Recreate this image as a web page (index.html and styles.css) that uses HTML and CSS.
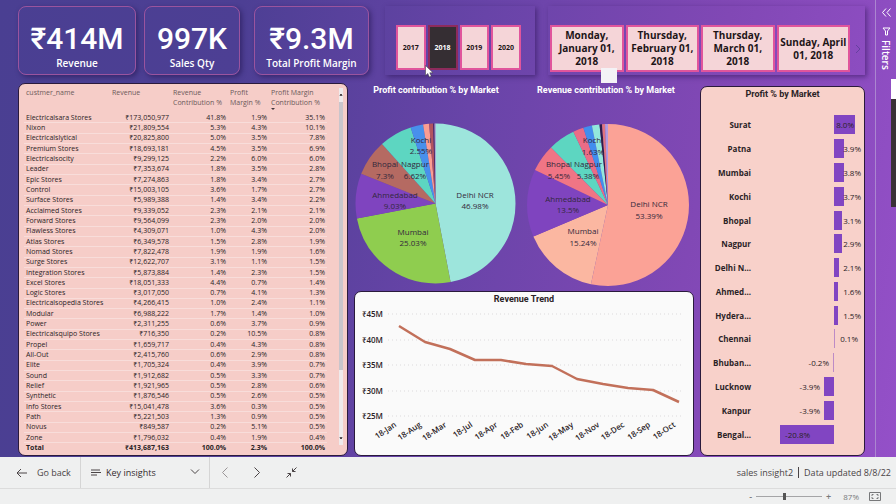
FILE: index.html
```html
<!DOCTYPE html>
<html lang="en">
<head>
<meta charset="utf-8">
<title>Sales insight</title>
<link rel="stylesheet" href="styles.css">
</head>
<body>
<main class="stage">
  <div class="report">
    <header class="top">
      <section class="kpi kpi-revenue"><strong>₹414M</strong><span>Revenue</span></section>
      <section class="kpi kpi-qty"><strong>997K</strong><span>Sales Qty</span></section>
      <section class="kpi kpi-margin"><strong>₹9.3M</strong><span>Total Profit Margin</span></section>
      <div class="slicer years">
        <button type="button">2017</button>
        <button type="button" class="selected">2018</button>
        <button type="button">2019</button>
        <button type="button">2020</button>
      </div>
      <div class="slicer dates">
        <button type="button">Monday, January 01, 2018</button>
        <button type="button">Thursday, February 01, 2018</button>
        <button type="button">Thursday, March 01, 2018</button>
        <button type="button">Sunday, April 01, 2018</button>
        <svg class="next" viewBox="0 0 6 10" aria-hidden="true"><path d="M1 1l4 4-4 4"/></svg>
      </div>
    </header>
    <div class="panels">
      <section class="panel customers">
        <table>
          <thead>
            <tr><th>custmer_name</th><th>Revenue</th><th>Revenue<br>Contribution %</th><th>Profit<br>Margin %</th><th class="sorted">Profit Margin<br>Contribution %</th></tr>
          </thead>
          <tbody>
            <tr><td>Electricalsara Stores</td><td>₹173,050,977</td><td>41.8%</td><td>1.9%</td><td>35.1%</td></tr>
            <tr><td>Nixon</td><td>₹21,809,554</td><td>5.3%</td><td>4.3%</td><td>10.1%</td></tr>
            <tr><td>Electricalslytical</td><td>₹20,825,800</td><td>5.0%</td><td>3.5%</td><td>7.8%</td></tr>
            <tr><td>Premium Stores</td><td>₹18,693,181</td><td>4.5%</td><td>3.5%</td><td>6.9%</td></tr>
            <tr><td>Electricalsocity</td><td>₹9,299,125</td><td>2.2%</td><td>6.0%</td><td>6.0%</td></tr>
            <tr><td>Leader</td><td>₹7,353,674</td><td>1.8%</td><td>3.5%</td><td>2.8%</td></tr>
            <tr><td>Epic Stores</td><td>₹7,274,863</td><td>1.8%</td><td>3.4%</td><td>2.7%</td></tr>
            <tr><td>Control</td><td>₹15,003,105</td><td>3.6%</td><td>1.7%</td><td>2.7%</td></tr>
            <tr><td>Surface Stores</td><td>₹5,989,388</td><td>1.4%</td><td>3.4%</td><td>2.2%</td></tr>
            <tr><td>Acclaimed Stores</td><td>₹9,339,052</td><td>2.3%</td><td>2.1%</td><td>2.1%</td></tr>
            <tr><td>Forward Stores</td><td>₹9,564,099</td><td>2.3%</td><td>2.0%</td><td>2.0%</td></tr>
            <tr><td>Flawless Stores</td><td>₹4,309,071</td><td>1.0%</td><td>4.3%</td><td>2.0%</td></tr>
            <tr><td>Atlas Stores</td><td>₹6,349,578</td><td>1.5%</td><td>2.8%</td><td>1.9%</td></tr>
            <tr><td>Nomad Stores</td><td>₹7,822,478</td><td>1.9%</td><td>1.9%</td><td>1.6%</td></tr>
            <tr><td>Surge Stores</td><td>₹12,622,707</td><td>3.1%</td><td>1.1%</td><td>1.5%</td></tr>
            <tr><td>Integration Stores</td><td>₹5,873,884</td><td>1.4%</td><td>2.3%</td><td>1.5%</td></tr>
            <tr><td>Excel Stores</td><td>₹18,051,333</td><td>4.4%</td><td>0.7%</td><td>1.4%</td></tr>
            <tr><td>Logic Stores</td><td>₹3,017,050</td><td>0.7%</td><td>4.1%</td><td>1.3%</td></tr>
            <tr><td>Electricalsopedia Stores</td><td>₹4,266,415</td><td>1.0%</td><td>2.4%</td><td>1.1%</td></tr>
            <tr><td>Modular</td><td>₹6,988,222</td><td>1.7%</td><td>1.4%</td><td>1.0%</td></tr>
            <tr><td>Power</td><td>₹2,311,255</td><td>0.6%</td><td>3.7%</td><td>0.9%</td></tr>
            <tr><td>Electricalsquipo Stores</td><td>₹716,350</td><td>0.2%</td><td>10.5%</td><td>0.8%</td></tr>
            <tr><td>Propel</td><td>₹1,659,717</td><td>0.4%</td><td>4.3%</td><td>0.8%</td></tr>
            <tr><td>All-Out</td><td>₹2,415,760</td><td>0.6%</td><td>2.9%</td><td>0.8%</td></tr>
            <tr><td>Elite</td><td>₹1,705,324</td><td>0.4%</td><td>3.9%</td><td>0.7%</td></tr>
            <tr><td>Sound</td><td>₹1,912,682</td><td>0.5%</td><td>3.3%</td><td>0.7%</td></tr>
            <tr><td>Relief</td><td>₹1,921,965</td><td>0.5%</td><td>2.8%</td><td>0.6%</td></tr>
            <tr><td>Synthetic</td><td>₹1,876,546</td><td>0.5%</td><td>2.6%</td><td>0.5%</td></tr>
            <tr><td>Info Stores</td><td>₹15,041,478</td><td>3.6%</td><td>0.3%</td><td>0.5%</td></tr>
            <tr><td>Path</td><td>₹5,221,503</td><td>1.3%</td><td>0.9%</td><td>0.5%</td></tr>
            <tr><td>Novus</td><td>₹849,587</td><td>0.2%</td><td>5.1%</td><td>0.5%</td></tr>
            <tr><td>Zone</td><td>₹1,796,032</td><td>0.4%</td><td>1.9%</td><td>0.4%</td></tr>
            <tr class="total"><td>Total</td><td>₹413,687,163</td><td>100.0%</td><td>2.3%</td><td>100.0%</td></tr>
          </tbody>
        </table>
        <div class="scrollbar" aria-hidden="true">
          <svg viewBox="0 0 4 14"><path d="M1 8l1-2 1 2"/></svg>
          <div class="scroll-thumb"></div>
          <svg viewBox="0 0 4 14"><path d="M1 6l1 2 1-2"/></svg>
        </div>
      </section>

      <div class="middle">
        <div class="pies">
          <figure class="pie">
            <figcaption>Profit contribution % by Market</figcaption>
            <svg viewBox="0 0 164 193" role="img" aria-label="Profit contribution by market">
              <g class="slices" transform="rotate(-90 81.5 106.5)">
                <circle cx="81.5" cy="106.5" r="40" pathLength="100" stroke="#9de5dc" stroke-dasharray="46.98 100"/>
                <circle cx="81.5" cy="106.5" r="40" pathLength="100" stroke="#8fcd4f" stroke-dasharray="25.03 100" stroke-dashoffset="-46.98"/>
                <circle cx="81.5" cy="106.5" r="40" pathLength="100" stroke="#7f44bf" stroke-dasharray="9.03 100" stroke-dashoffset="-72.01"/>
                <circle cx="81.5" cy="106.5" r="40" pathLength="100" stroke="#b56a62" stroke-dasharray="7.3 100" stroke-dashoffset="-81.04"/>
                <circle cx="81.5" cy="106.5" r="40" pathLength="100" stroke="#5dd6c1" stroke-dasharray="6.62 100" stroke-dashoffset="-88.34"/>
                <circle cx="81.5" cy="106.5" r="40" pathLength="100" stroke="#4890ec" stroke-dasharray="2.55 100" stroke-dashoffset="-94.96"/>
                <circle cx="81.5" cy="106.5" r="40" pathLength="100" stroke="#fa9d92" stroke-dasharray="1.2 100" stroke-dashoffset="-97.51"/>
                <circle cx="81.5" cy="106.5" r="40" pathLength="100" stroke="#b2545f" stroke-dasharray=".8 100" stroke-dashoffset="-98.71"/>
                <circle cx="81.5" cy="106.5" r="40" pathLength="100" stroke="#4c2560" stroke-dasharray=".3 100" stroke-dashoffset="-99.51"/>
                <circle cx="81.5" cy="106.5" r="40" pathLength="100" stroke="#c9c0e4" stroke-dasharray=".19 100" stroke-dashoffset="-99.81"/>
              </g>
              <g class="pie-labels">
                <text x="121" y="101">Delhi NCR</text><text x="121" y="112">46.98%</text>
                <text x="59" y="138">Mumbai</text><text x="59" y="149">25.03%</text>
                <text x="41" y="101">Ahmedabad</text><text x="41" y="112">9.03%</text>
                <text x="31" y="70">Bhopal</text><text x="31" y="82">7.3%</text>
                <text x="61" y="70">Nagpur</text><text x="61" y="82">6.62%</text>
                <text x="67" y="46">Kochi</text><text x="67" y="57">2.55%</text>
              </g>
            </svg>
          </figure>
          <figure class="pie">
            <figcaption>Revenue contribution % by Market</figcaption>
            <svg viewBox="0 0 176 193" role="img" aria-label="Revenue contribution by market">
              <g class="slices" transform="rotate(-90 90 108)">
                <circle cx="90" cy="108" r="40.5" pathLength="100" stroke="#fba296" stroke-dasharray="53.39 100"/>
                <circle cx="90" cy="108" r="40.5" pathLength="100" stroke="#fbb7a1" stroke-dasharray="15.24 100" stroke-dashoffset="-53.39"/>
                <circle cx="90" cy="108" r="40.5" pathLength="100" stroke="#7f44bf" stroke-dasharray="13.5 100" stroke-dashoffset="-68.63"/>
                <circle cx="90" cy="108" r="40.5" pathLength="100" stroke="#f07585" stroke-dasharray="5.45 100" stroke-dashoffset="-82.13"/>
                <circle cx="90" cy="108" r="40.5" pathLength="100" stroke="#5dd6c1" stroke-dasharray="5.38 100" stroke-dashoffset="-87.58"/>
                <circle cx="90" cy="108" r="40.5" pathLength="100" stroke="#e96c86" stroke-dasharray="2.1 100" stroke-dashoffset="-92.96"/>
                <circle cx="90" cy="108" r="40.5" pathLength="100" stroke="#428eee" stroke-dasharray="1.74 100" stroke-dashoffset="-95.06"/>
                <circle cx="90" cy="108" r="40.5" pathLength="100" stroke="#92e8dc" stroke-dasharray="1.5 100" stroke-dashoffset="-96.8"/>
                <circle cx="90" cy="108" r="40.5" pathLength="100" stroke="#2c1d4c" stroke-dasharray=".5 100" stroke-dashoffset="-98.3"/>
                <circle cx="90" cy="108" r="40.5" pathLength="100" stroke="#e07480" stroke-dasharray=".6 100" stroke-dashoffset="-98.8"/>
                <circle cx="90" cy="108" r="40.5" pathLength="100" stroke="#b29be0" stroke-dasharray=".6 100" stroke-dashoffset="-99.4"/>
              </g>
              <g class="pie-labels">
                <text x="131" y="110">Delhi NCR</text><text x="131" y="122">53.39%</text>
                <text x="65" y="137">Mumbai</text><text x="65" y="149">15.24%</text>
                <text x="50" y="105">Ahmedabad</text><text x="50" y="116">13.5%</text>
                <text x="41" y="70">Bhopal</text><text x="41" y="82">5.45%</text>
                <text x="70" y="70">Nagpur</text><text x="70" y="82">5.38%</text>
                <text x="75" y="46">Kochi</text><text x="75" y="58">1.63%</text>
              </g>
            </svg>
          </figure>
        </div>
        <section class="panel trend">
          <h2>Revenue Trend</h2>
          <svg viewBox="0 0 338 147" role="img" aria-label="Revenue by month">
            <path class="grid" d="M33 8H328M33 34H328M33 59H328M33 85H328M33 110H328"/>
            <g class="y-axis">
              <text x="28" y="11">₹45M</text><text x="28" y="37">₹40M</text><text x="28" y="62">₹35M</text><text x="28" y="88">₹30M</text><text x="28" y="113">₹25M</text>
            </g>
            <polyline class="line" points="44,20 70,36 95,43 120,54 146,54 171,58 197,60 222,73 248,78 273,82 298,84 324,96"/>
            <g class="x-axis">
              <text transform="translate(42 120) rotate(-34)">18-Jan</text>
              <text transform="translate(67 120) rotate(-34)">18-Aug</text>
              <text transform="translate(92 120) rotate(-34)">18-Mar</text>
              <text transform="translate(118 120) rotate(-34)">18-Jul</text>
              <text transform="translate(143 120) rotate(-34)">18-Apr</text>
              <text transform="translate(169 120) rotate(-34)">18-Feb</text>
              <text transform="translate(194 120) rotate(-34)">18-Jun</text>
              <text transform="translate(219 120) rotate(-34)">18-May</text>
              <text transform="translate(245 120) rotate(-34)">18-Nov</text>
              <text transform="translate(270 120) rotate(-34)">18-Dec</text>
              <text transform="translate(296 120) rotate(-34)">18-Sep</text>
              <text transform="translate(321 120) rotate(-34)">18-Oct</text>
            </g>
          </svg>
        </section>
      </div>

      <section class="panel markets">
        <h2>Profit % by Market</h2>
        <ul>
          <li><b>Surat</b><div class="pos inside"><i style="width:70%"></i><span>8.0%</span></div></li>
          <li><b>Patna</b><div class="pos"><i style="width:34%"></i><span>3.9%</span></div></li>
          <li><b>Mumbai</b><div class="pos"><i style="width:33%"></i><span>3.8%</span></div></li>
          <li><b>Kochi</b><div class="pos"><i style="width:32%"></i><span>3.7%</span></div></li>
          <li><b>Bhopal</b><div class="pos"><i style="width:27%"></i><span>3.1%</span></div></li>
          <li><b>Nagpur</b><div class="pos"><i style="width:25%"></i><span>2.9%</span></div></li>
          <li><b>Delhi N...</b><div class="pos"><i style="width:18%"></i><span>2.1%</span></div></li>
          <li><b>Ahmed...</b><div class="pos"><i style="width:14%"></i><span>1.6%</span></div></li>
          <li><b>Hydera...</b><div class="pos"><i style="width:13%"></i><span>1.5%</span></div></li>
          <li><b>Chennai</b><div class="pos tiny"><i style="width:1%"></i><span>0.1%</span></div></li>
          <li><b>Bhuban...</b><div class="neg tiny"><span>-0.2%</span><i style="width:1%"></i></div></li>
          <li><b>Lucknow</b><div class="neg"><span>-3.9%</span><i style="width:12%"></i></div></li>
          <li><b>Kanpur</b><div class="neg"><span>-3.9%</span><i style="width:12%"></i></div></li>
          <li><b>Bengal...</b><div class="neg inside"><i style="width:65%"><span>-20.8%</span></i></div></li>
        </ul>
      </section>
    </div>
  </div>

  <aside class="filters">
    <svg class="expand" viewBox="0 0 9 9" aria-hidden="true"><path d="M4 .5l-3.500 4 3.500 4M8.500 .5l-3.500 4 3.500 4"/></svg>
    <svg class="funnel" viewBox="0 0 9 9" aria-hidden="true"><path d="M1 1h7L5.500 4v4h-2V4z"/></svg>
    <span>Filters</span>
  </aside>

  <div class="thumbnail" aria-hidden="true"></div>
  <div class="handle" aria-hidden="true"></div>
  <svg class="cursor" viewBox="0 0 9 13" aria-hidden="true"><path d="M.5.5v10l2.300-2 1.500 3.500 2-.8-1.500-3.400h3.200z"/></svg>
</main>

<nav class="toolbar">
  <button type="button" class="back"><svg viewBox="0 0 11 10" aria-hidden="true"><path d="M11 5H1M5 1L1 5l4 4"/></svg>Go back</button>
  <div class="bookmark">
    <svg class="lines" viewBox="0 0 10 7" aria-hidden="true"><path d="M0 1h9M0 3.500h10M0 6h6"/></svg>
    <select aria-label="Bookmark"><option>Key insights</option></select>
    <svg class="chevron" viewBox="0 0 10 6" aria-hidden="true"><path d="M1 .5l4 4 4-4"/></svg>
  </div>
  <div class="steps">
    <button type="button" class="muted" aria-label="Previous"><svg viewBox="0 0 6 11"><path d="M5.500 .5l-5 5 5 5"/></svg></button>
    <button type="button" aria-label="Next"><svg viewBox="0 0 6 11"><path d="M.5 .5l5 5-5 5"/></svg></button>
    <button type="button" aria-label="Exit full screen"><svg class="shrink" viewBox="0 0 11 11"><path d="M10.500 .5L6.500 4.500M6.500 1.500v3h3M.5 10.500l4-4M1.500 6.500h3v3"/></svg></button>
  </div>
  <p><span>sales insight2</span><span>Data updated 8/8/22</span></p>
</nav>
<footer class="status">
  <span>-</span>
  <input type="range" min="10" max="190" value="87" aria-label="Zoom">
  <span>+</span>
  <output>87%</output>
  <svg viewBox="0 0 12 9" aria-hidden="true"><path d="M.5.5h11v8H.5zM3 4V2.500h1.500M7.500 2.500H9V4M9 5v1.500H7.500M4.500 6.500H3V5"/></svg>
</footer>
</body>
</html>
```
FILE: styles.css
```css
* { box-sizing: border-box; }

body {
  margin: 0;
  min-height: 100vh;
  display: flex;
  flex-direction: column;
  font-family: "Open Sans", "Noto Sans", sans-serif;
  font-size: 8px;
  background: #eff0f0;
  color: #2b2326;
}

button, select, input { font: inherit; color: inherit; margin: 0; }
h2, figure, ul, p { margin: 0; padding: 0; }
svg { display: block; fill: none; stroke: currentColor; }

.stage {
  position: relative;
  flex: 1;
  display: flex;
  overflow: hidden;
  background: linear-gradient(100deg, #4a3f92 0%, #4d3f94 25%, #6844a8 50%, #8148b5 75%, #9450c8 100%);
}

.report {
  flex: 1;
  min-width: 0;
  display: flex;
  flex-direction: column;
  gap: 8px;
  padding: 6px 10px 1px 18px;
}

/* Header row */
.top {
  display: grid;
  grid-template-columns:
    minmax(0, 126fr) minmax(0, 110fr) minmax(0, 131fr)
    minmax(0, 163fr) minmax(0, 317fr);
}

.kpi {
  height: 69px;
  display: flex;
  flex-direction: column;
  align-items: center;
  padding-top: 16px;
  border: 1px solid #9a549f;
  border-radius: 8px;
  box-shadow: 2px 2px 5px rgba(30, 15, 70, .5);
  color: #fff;
  white-space: nowrap;
}
.kpi strong { font: 500 30px/32px Roboto, "Noto Sans", sans-serif; }
.kpi span { font-size: 10px; line-height: 16px; font-weight: 600; }
.kpi-revenue { margin-right: 8px; }
.kpi-qty { margin-right: 14px; }
.kpi-margin { margin-right: 16px; }

.slicer {
  display: flex;
  height: 69px;
  padding: 19px 14px 5px 11px;
  gap: 2px;
  box-shadow: 2px 2px 5px rgba(40, 15, 80, .5);
}
.slicer button {
  flex: 1 1 0;
  min-width: 0;
  padding: 0;
  border: 2px solid #e0559c;
  background: #f5d5d8;
  color: #1d1417;
  font-weight: 700;
}
.years { margin-right: 13px; }
.years button { font-size: 7px; }
.years .selected { background: #352e33; border-color: #8d2b5c; color: #fff; }
.dates { padding: 19px 4px 3px 2px; }
.dates button { font-size: 10px; line-height: 13px; }
.next { width: 6px; height: 10px; margin: auto 0 auto 3px; color: #65409f; }

/* Panels */
.panels {
  flex: 1;
  display: grid;
  grid-template-columns: minmax(0, 330fr) minmax(0, 340fr) minmax(0, 165fr);
  gap: 6px;
}
.panel { border: 1px solid #2a1a3c; border-radius: 7px; }
.panel h2 {
  font: 700 9px/14px Roboto, sans-serif;
  text-align: center;
}

.customers {
  display: flex;
  gap: 12px;
  padding: 4px 4px 2px 5px;
  background: #f6cdc8;
}
table { flex: 1; border-collapse: collapse; table-layout: fixed; font-size: 7px; line-height: 8px; }
th, td { padding: 0 2px; text-align: right; white-space: nowrap; }
td { border-bottom: 1px solid #f8ddda; }
th { height: 25px; font-weight: 400; line-height: 10px; text-align: left; vertical-align: top; color: #6c5a5a; }
th:nth-child(1) { width: 86px; }
th:nth-child(2) { width: 61px; }
th:nth-child(3) { width: 57px; }
th:nth-child(4) { width: 41px; }
td:first-child { text-align: left; }
.sorted { position: relative; }
.sorted::after {
  content: "";
  position: absolute;
  left: 2px;
  bottom: 1px;
  border: 2px solid transparent;
  border-top-color: #40343a;
}
.total td { font-weight: 700; border: 0; }

.scrollbar { width: 4px; display: flex; flex-direction: column; background: #efeaec; margin-bottom: 8px; }
.scrollbar svg { width: 4px; height: 14px; }
.scroll-thumb { flex: none; height: 75%; background: #c9c5cc; }
.scrollbar svg:last-child { margin-top: auto; }

.middle { display: flex; flex-direction: column; }
.pies { display: grid; grid-template-columns: minmax(0, 164fr) minmax(0, 176fr); }
.pie figcaption {
  font: 700 9px/14px Roboto, sans-serif;
  color: #fff;
  text-align: center;
  white-space: nowrap;
}
.pie svg { width: 100%; height: auto; }
.slices circle { stroke-width: 80; }
.pie + .pie .slices circle { stroke-width: 81; }
.pie-labels { fill: #33283b; stroke: none; font-size: 8px; text-anchor: middle; }

.trend { flex: 1; background: #fafafa; margin-top: 1px; }
.trend svg { width: 100%; height: auto; }
.grid { stroke: #dcdadc; stroke-dasharray: 1 3; }
.line { stroke: #c2705a; stroke-width: 2.5; stroke-linejoin: round; }
.y-axis, .x-axis { fill: #2a2226; stroke: none; font-size: 8px; font-weight: 600; text-anchor: end; }

.markets {
  display: flex;
  flex-direction: column;
  margin-top: 3px;
  padding-bottom: 9px;
  background: #f8d1ca;
}
.markets h2 { height: 26px; }
.markets ul { flex: 1; display: flex; flex-direction: column; list-style: none; }
.markets li { flex: 1; display: grid; grid-template-columns: 50fr 83fr 30fr; align-items: center; }
.markets b { text-align: right; font-size: 8px; white-space: nowrap; }
.markets i { display: block; height: 19px; background: #8145c2; font-style: normal; }
.pos, .neg { display: flex; align-items: center; }
.pos { grid-column: 3; position: relative; }
.pos span { position: absolute; right: 3px; }
.pos.inside span { right: 10px; }
.pos.tiny span { right: 6px; }
.neg { justify-content: flex-end; gap: 4px; }
.neg.inside i { display: flex; align-items: center; padding-left: 5px; }
.tiny i { opacity: .5; min-width: 1px; }

/* Collapsed filters pane */
.filters {
  width: 21px;
  display: flex;
  flex-direction: column;
  align-items: center;
  padding-top: 8px;
  border-left: 1px solid #ab86d0;
  color: #fff;
}
.filters svg { width: 9px; height: 9px; }
.filters .funnel { margin: 10px 0 4px; }
.filters span { writing-mode: vertical-rl; font-size: 10px; font-weight: 600; line-height: 14px; }

/* Floating items above the report */
.thumbnail {
  position: absolute;
  right: 0;
  top: 79px;
  width: 5px;
  height: 128px;
  background: linear-gradient(#fff 20px, #3a3037 20px);
}
.handle { position: absolute; left: 601px; top: 68px; width: 16px; height: 15px; background: #f4f2f6; }
.cursor { position: absolute; left: 425px; top: 65px; width: 9px; height: 13px; fill: #fff; stroke: #333; stroke-width: .5; }

/* Bottom bars */
.toolbar {
  height: 32px;
  display: flex;
  align-items: stretch;
  border-bottom: 1px solid #dcdcdc;
  font-size: 9px;
  color: #4a4446;
}
.toolbar button { border: 0; padding: 0; background: none; display: flex; align-items: center; }
.toolbar .back { width: 81px; gap: 10px; padding-left: 16px; border-right: 1px solid #d5d5d5; }
.back svg { width: 11px; height: 10px; }
.bookmark { position: relative; width: 129px; border-right: 1px solid #d5d5d5; }
.bookmark select {
  appearance: none;
  width: 100%;
  height: 100%;
  border: 0;
  padding: 0 20px 0 25px;
  background: none;
  color: #332a2d;
}
.bookmark svg { position: absolute; top: 12px; pointer-events: none; }
.lines { left: 10px; width: 10px; height: 7px; }
.chevron { right: 9px; width: 10px; height: 6px; }
.steps { display: flex; gap: 26px; padding-left: 12px; }
.steps svg { width: 6px; height: 11px; }
.steps .shrink { width: 11px; height: 11px; }
.steps .muted { color: #9a9597; }
.toolbar p { margin-left: auto; display: flex; align-items: center; padding-right: 5px; }
.toolbar p span { line-height: 11px; }
.toolbar p span + span { margin-left: 5px; padding-left: 5px; border-left: 1px solid #4a4446; }

.status {
  height: 15px;
  display: flex;
  align-items: center;
  justify-content: flex-end;
  gap: 4px;
  padding-right: 15px;
  color: #77787a;
}
.status span { font-size: 9px; font-weight: 600; }
.status input { appearance: none; width: 66px; height: 8px; background: linear-gradient(#a5a5a7, #a5a5a7) center / 100% 1px no-repeat; }
.status input::-webkit-slider-thumb { appearance: none; width: 3px; height: 7px; background: #555; }
.status output { margin-left: 8px; margin-right: 6px; font-size: 8px; }
.status svg { width: 12px; height: 9px; }
```
